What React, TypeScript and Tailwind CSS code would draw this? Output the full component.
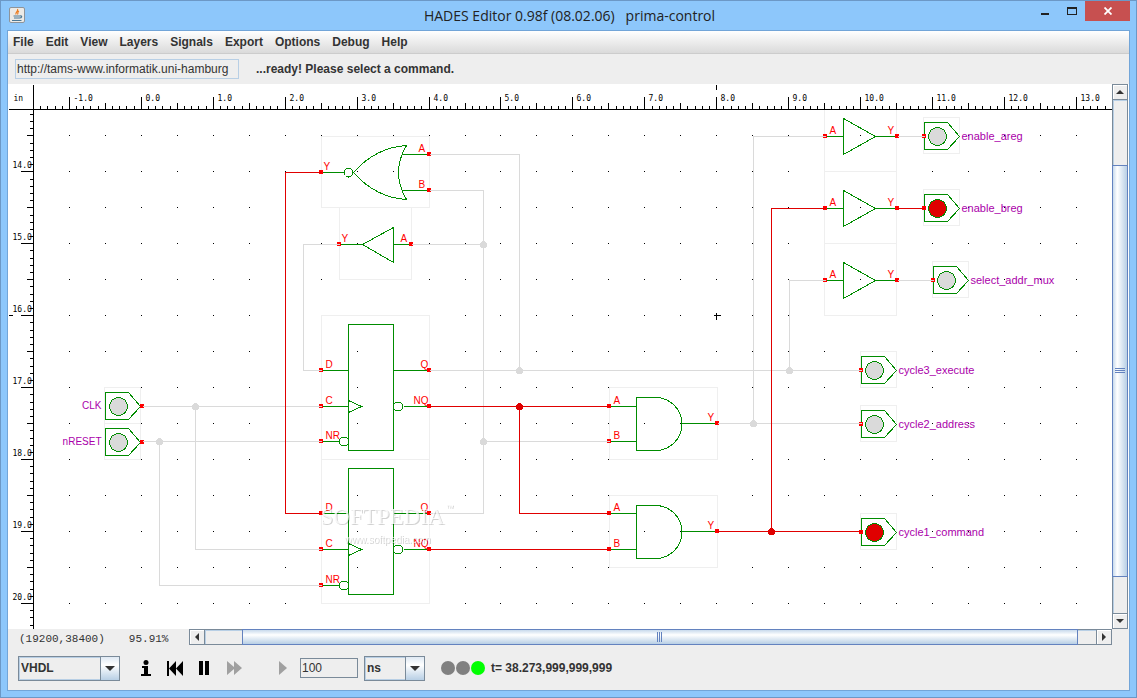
import { useState } from 'react';

const MENUS = ['File', 'Edit', 'View', 'Layers', 'Signals', 'Export', 'Options', 'Debug', 'Help'];

const GREEN = '#008c00';
const RED = '#e00000';
const GRAY = '#dadada';

// One inch on the sheet is a little less than 72 pixels at this zoom
const INCH = 71.93;
const rulerX = (inch: number) => Math.floor(69.4 + INCH * inch);
const rulerY = (inch: number) => Math.floor(135.9 + INCH * (inch - 13.5));

const range = (from: number, to: number) => Array.from({ length: to - from + 1 }, (_, i) => from + i);

const X_TICKS = range(-4, 144);
const Y_TICKS = range(132, 204);

const GRAY_WIRES = [
  'M142 406H321M195 406V549H321',
  'M142 441H321M159 441V585H321',
  'M429 154H519V370',
  'M429 190H483V513H429M483 441H609',
  'M411 244H483',
  'M339 244H303V370H321',
  'M429 370H861M789 370V280H825',
  'M717 423H861M753 423V136H825',
  'M897 136H924M897 280H933',
];

const RED_WIRES = [
  'M321 172H285V513H321',
  'M429 406H609M519 406V513H609',
  'M429 549H609',
  'M717 531H861M771 531V208H825',
  'M897 208H924',
];

const GRAY_JOINTS = [[195, 406], [159, 441], [483, 244], [519, 370], [483, 441], [789, 370], [753, 423]];
const RED_JOINTS = [[519, 406], [771, 531]];

const OUTPUTS = [
  { name: 'enable_areg', x: 924, y: 136, on: false },
  { name: 'enable_breg', x: 924, y: 208, on: true },
  { name: 'select_addr_mux', x: 933, y: 280, on: false },
  { name: 'cycle3_execute', x: 861, y: 370, on: false },
  { name: 'cycle2_address', x: 861, y: 424, on: false },
  { name: 'cycle1_command', x: 861, y: 532, on: true },
];

const INPUTS = [
  { name: 'CLK', y: 406 },
  { name: 'nRESET', y: 442 },
];

function Bounds({ x, y, w, h }: { x: number; y: number; w: number; h: number }) {
  return <rect x={x} y={y} width={w} height={h} fill="none" stroke="#efefef" />;
}

function Pin({ x, y, label, lx }: { x: number; y: number; label?: string; lx?: number }) {
  return (
    <>
      <rect x={x - 2.5} y={y - 2.5} width={4} height={4} fill="#ff0000" />
      {label && (
        <text x={lx} y={y - 3} fontSize={10} fill="#ff0000">
          {label}
        </text>
      )}
    </>
  );
}

function NorGate() {
  return (
    <g>
      <Bounds x={321} y={136} w={108} h={71} />
      <g fill="none" stroke={GREEN}>
        <path d="M321 172H344M402 154H429M402 190H429" />
        <circle cx={348} cy={172} r={4.5} />
        <path d="M353 172Q375 147 406 145Q390 172 406 199Q375 197 353 172Z" />
      </g>
      <Pin x={321} y={172} label="Y" lx={323} />
      <Pin x={429} y={154} label="A" lx={418} />
      <Pin x={429} y={190} label="B" lx={418} />
    </g>
  );
}

function BackBuffer() {
  return (
    <g>
      <Bounds x={339} y={207} w={72} h={72} />
      <path d="M339 244H362M393 244H411M362 244L393 227V262Z" fill="none" stroke={GREEN} />
      <Pin x={339} y={244} label="Y" lx={341} />
      <Pin x={411} y={244} label="A" lx={400} />
    </g>
  );
}

function Buffer({ y }: { y: number }) {
  return (
    <g>
      <Bounds x={824} y={y - 37} w={72} h={72} />
      <path d={`M825 ${y}H843M875 ${y}H897M843 ${y - 18}L875 ${y}L843 ${y + 18}Z`} fill="none" stroke={GREEN} />
      <Pin x={825} y={y} label="A" lx={829} />
      <Pin x={897} y={y} label="Y" lx={887} />
    </g>
  );
}

function FlipFlop({ top, d, c, r }: { top: number; d: number; c: number; r: number }) {
  return (
    <g>
      <Bounds x={321} y={top} w={108} h={144} />
      <g fill="none" stroke={GREEN}>
        <rect x={348} y={top + 9} width={45} height={126} />
        <path d={`M321 ${d}H348M321 ${c}H348M321 ${r}H339M393 ${d}H429M403 ${c}H429`} />
        <path d={`M348 ${c - 6}L361 ${c}L348 ${c + 6}`} />
        <circle cx={343.5} cy={r} r={4.5} />
        <circle cx={397.5} cy={c} r={4.5} />
      </g>
      <Pin x={321} y={d} label="D" lx={325} />
      <Pin x={321} y={c} label="C" lx={325} />
      <Pin x={321} y={r} label="NR" lx={325} />
      <Pin x={429} y={d} label="Q" lx={420} />
      <Pin x={429} y={c} label="NQ" lx={413} />
    </g>
  );
}

function AndGate({ top, a, b, y }: { top: number; a: number; b: number; y: number }) {
  return (
    <g>
      <Bounds x={609} y={top} w={108} h={72} />
      <path
        d={`M609 ${a}H636M609 ${b}H636M681 ${y}H717M655 ${y - 26}H636V${y + 27}H655A26.5 26.5 0 0 0 655 ${y - 26}`}
        fill="none"
        stroke={GREEN}
      />
      <Pin x={609} y={a} label="A" lx={613} />
      <Pin x={609} y={b} label="B" lx={613} />
      <Pin x={717} y={y} label="Y" lx={707} />
    </g>
  );
}

function Port({ x, y, on = false }: { x: number; y: number; on?: boolean }) {
  return (
    <>
      <Bounds x={x - 1} y={y - 19} w={36} h={36} />
      <path d={`M${x} ${y - 14}H${x + 23}L${x + 35} ${y}L${x + 23} ${y + 13}H${x}Z`} fill="none" stroke={GREEN} />
      <circle cx={x + 13} cy={y} r={9} fill={on ? RED : GRAY} stroke={GREEN} />
    </>
  );
}

function Rulers() {
  return (
    <g stroke="#000">
      <rect x={-1} y={-1} width="100%" height={26} fill="#fff" stroke="none" />
      <path d="M0 25H4000M25 0V4000" />
      <path d="M708 0V5M0 231H4" />
      <g transform="translate(-8 -84)">
        {X_TICKS.map((t) => (
          <path key={t} d={`M${rulerX(t / 10)} 109V${t % 10 === 0 ? 96 : t % 5 === 0 ? 102 : 105}`} />
        ))}
        {Y_TICKS.map((t) => (
          <path key={t} d={`M33 ${rulerY(t / 10)}H${t % 10 === 0 ? 20 : t % 5 === 0 ? 26 : 29}`} />
        ))}
      </g>
      <g transform="translate(-8 -84)" stroke="none" fill="#000" className="font-['DejaVu_Sans_Mono',monospace] text-[8px]">
        <text x={13} y={100}>in</text>
        {range(0, 14).map((i) => (
          <text key={i} x={rulerX(i) + 4} y={100}>{(i - 1).toFixed(1)}</text>
        ))}
        {range(14, 20).map((i) => (
          <text key={i} x={12} y={rulerY(i) - 4}>{i.toFixed(1)}</text>
        ))}
      </g>
    </g>
  );
}

function Schematic() {
  return (
    <svg
      role="img"
      aria-label="Schematic of prima-control"
      className="block min-w-0 flex-1 bg-white font-['Liberation_Sans',sans-serif]"
      shapeRendering="crispEdges"
    >
      {/* shift by half a pixel so that integer coordinates hit pixel centres */}
      <g transform="translate(-7.5 -83.5)">
        {range(0, 28).map((c) =>
          range(0, 13).map((r) => (
            <rect key={`${c}-${r}`} x={rulerX(c / 2) - 0.5} y={rulerY(13.5 + r / 2) - 0.5} width={1} height={1} />
          ))
        )}
        <NorGate />
        <BackBuffer />
        <FlipFlop top={315} d={370} c={406} r={441} />
        <FlipFlop top={459} d={513} c={549} r={585} />
        <AndGate top={387} a={406} b={441} y={423} />
        <AndGate top={495} a={513} b={549} y={531} />
        <Buffer y={136} />
        <Buffer y={208} />
        <Buffer y={280} />

        {OUTPUTS.map((o) => (
          <g key={o.name}>
            <Port x={o.x} y={o.y} on={o.on} />
            <Pin x={o.x} y={o.y} />
            <text x={o.x + 37} y={o.y + 3} fontSize={11} fill="#aa00aa">{o.name}</text>
          </g>
        ))}
        {INPUTS.map((p) => (
          <g key={p.name}>
            <Port x={105} y={p.y} />
            <Pin x={142} y={p.y} />
            <text x={101} y={p.y + 2} fontSize={10} fill="#aa00aa" textAnchor="end">{p.name}</text>
          </g>
        ))}

        <path d={GRAY_WIRES.join('')} fill="none" stroke={GRAY} />
        <path d={RED_WIRES.join('')} fill="none" stroke={RED} />
        {GRAY_JOINTS.map(([x, y]) => (
          <circle key={`${x}-${y}`} cx={x} cy={y} r={3.5} fill={GRAY} />
        ))}
        {RED_JOINTS.map(([x, y]) => (
          <circle key={`${x}-${y}`} cx={x} cy={y} r={3.5} fill={RED} />
        ))}

        <path d="M713 315H720M716 312V319" stroke="#000" />

        <g fill="#fff" fillOpacity={0.8} className="drop-shadow-[1px_1px_0_rgba(0,0,0,0.22)]">
          <text x={320} y={523} fontSize={23} className="font-['Liberation_Serif',serif]">SOFTPEDIA</text>
          <text x={445} y={509} fontSize={8}>™</text>
          <text x={344} y={542} fontSize={10}>www.softpedia.com</text>
        </g>
      </g>
      <g transform="translate(0.5 0.5)">
        <Rulers />
      </g>
    </svg>
  );
}

function Arrow({ dir }: { dir: 'up' | 'down' | 'left' | 'right' }) {
  const shapes = {
    up: 'M0 6L4 2L8 6Z',
    down: 'M0 2L4 6L8 2Z',
    left: 'M6 0L2 4L6 8Z',
    right: 'M2 0L6 4L2 8Z',
  };
  return (
    <svg viewBox="0 0 8 8" className="size-2" aria-hidden="true">
      <path d={shapes[dir]} fill="#333" />
    </svg>
  );
}

function ScrollButton({ dir }: { dir: 'up' | 'down' | 'left' | 'right' }) {
  return (
    <button
      aria-label={`Scroll ${dir}`}
      className="flex size-4 shrink-0 items-center justify-center border border-[#7a8a99] bg-[#eee] shadow-[inset_1px_1px_0_#fff]"
    >
      <Arrow dir={dir} />
    </button>
  );
}

function VerticalScroll() {
  return (
    <div className="flex w-[17px] shrink-0 flex-col border-r border-white bg-[#eee]">
      <ScrollButton dir="up" />
      <div className="flex flex-1 flex-col border-x border-[#7a8a99] shadow-[inset_1px_1px_0_#b8cfe5]">
        <div className="flex-[65]" />
        <div className="-mx-px flex flex-[411] flex-col items-center justify-center gap-px border border-[#6382bf] bg-linear-to-r from-[#c8daec] via-white via-30% to-[#b8cfe5]">
          {range(0, 2).map((i) => (
            <div key={i} className="h-px w-2.5 bg-[#6382bf]" />
          ))}
        </div>
        <div className="flex-[36]" />
      </div>
      <ScrollButton dir="down" />
    </div>
  );
}

function HorizontalScroll() {
  return (
    <div className="flex h-4 flex-1">
      <ScrollButton dir="left" />
      <div className="flex flex-1 border-y border-[#7a8a99] shadow-[inset_1px_1px_0_#b8cfe5]">
        <div className="flex-[37]" />
        <div className="-my-px flex flex-[836] items-center justify-center gap-px border border-[#6382bf] bg-linear-to-b from-[#c8daec] via-white via-35% to-[#b8cfe5]">
          {range(0, 2).map((i) => (
            <div key={i} className="h-2.5 w-px bg-[#6382bf]" />
          ))}
        </div>
        <div className="flex-[18]" />
      </div>
      <ScrollButton dir="right" />
    </div>
  );
}

function Combo({ label, options }: { label: string; options: string[] }) {
  return (
    <div className="relative flex h-[25px] border border-[#7a8a99] bg-[#eee]">
      <select
        aria-label={label}
        className="w-full appearance-none border border-[#b8cfe5] bg-transparent pl-px font-bold text-[#333] outline-none"
      >
        {options.map((o) => (
          <option key={o}>{o}</option>
        ))}
      </select>
      <div className="pointer-events-none absolute inset-y-0 right-0 flex w-[19px] items-center justify-center border-l border-[#7a8a99] bg-linear-to-b from-[#dfe9f3] via-white via-35% to-[#b8cfe5]">
        <svg viewBox="0 0 10 5" className="h-[5px] w-2.5" aria-hidden="true">
          <path d="M0 0H10L5 5Z" fill="#333" />
        </svg>
      </div>
    </div>
  );
}

function JavaIcon() {
  return (
    <svg viewBox="0 0 16 16" className="size-4" aria-hidden="true">
      <rect x="0.5" y="0.5" width="15" height="15" rx="1.5" fill="#eceae6" stroke="#8d949b" />
      <path d="M8.5 2C10 4 6 5 7 7.5M10 4C8 5 9.5 6 8.5 7.5" fill="none" stroke="#ec7a1c" strokeWidth="1.2" />
      <path d="M4.5 9H11M5 11H10.5M3 13.5H12.5M11 9C13.5 8.5 13 11 10.5 11" fill="none" stroke="#4a7896" strokeWidth="1.2" />
    </svg>
  );
}

function TitleBar() {
  return (
    <header className="flex h-[29px] shrink-0 items-start">
      <div className="flex flex-1 pt-[6px] pl-[2px]">
        <JavaIcon />
      </div>
      <h1 className="pt-1 font-['Open_Sans',sans-serif] text-[14px] leading-[22px] whitespace-pre text-[#222]">
        {'HADES Editor 0.98f (08.02.06)   prima-control'}
      </h1>
      <div className="flex flex-1 justify-end">
        <button aria-label="Minimize" className="flex h-5 w-[26px] items-center justify-center pt-[6px]">
          <span className="h-[2px] w-2 bg-[#222]" />
        </button>
        <button aria-label="Maximize" className="flex h-5 w-[27px] items-center justify-center">
          <span className="h-2 w-2.5 border border-t-2 border-[#222]" />
        </button>
        <button aria-label="Close" className="flex h-5 w-[45px] items-center justify-center bg-[#c75050]">
          <svg viewBox="0 0 8 8" className="size-2" aria-hidden="true">
            <path d="M0.5 0.5L7.5 7.5M7.5 0.5L0.5 7.5" stroke="#fff" strokeWidth="1.8" />
          </svg>
        </button>
      </div>
    </header>
  );
}

function Toolbar() {
  const [step, setStep] = useState('100');

  return (
    <div className="flex h-[43px] shrink-0 items-center pb-px pl-[10px]">
      <div className="w-[102px]">
        <Combo label="Simulation model" options={['VHDL']} />
      </div>
      <div className="ml-5 flex items-center gap-[15px]">
        <button aria-label="Info">
          <svg viewBox="0 0 12 16" className="h-4 w-3" aria-hidden="true">
            <circle cx="6" cy="2.5" r="2.5" />
            <path d="M2 6H8V14H11V16H1V14H4V8H2Z" />
          </svg>
        </button>
        <button aria-label="Rewind">
          <svg viewBox="0 0 17 15" className="h-[15px] w-[17px]" aria-hidden="true">
            <path d="M0 0H2V15H0ZM9 0V15L2 7.5ZM16 0V15L9 7.5Z" />
          </svg>
        </button>
        <button aria-label="Pause">
          <svg viewBox="0 0 10 14" className="h-3.5 w-2.5" aria-hidden="true">
            <path d="M0 0H4V14H0ZM6 0H10V14H6Z" />
          </svg>
        </button>
        <button aria-label="Fast forward" className="ml-[3px]">
          <svg viewBox="0 0 15 14" className="h-3.5 w-[15px]" aria-hidden="true">
            <path d="M0 0L7 6V0L15 7L7 14V8L0 14Z" fill="#a0a0a0" />
          </svg>
        </button>
        <button aria-label="Single step" className="ml-[22px]">
          <svg viewBox="0 0 8 14" className="h-3.5 w-2" aria-hidden="true">
            <path d="M0 0L8 7L0 14Z" fill="#a0a0a0" />
          </svg>
        </button>
      </div>
      <input
        aria-label="Step time"
        value={step}
        onChange={(e) => setStep(e.target.value)}
        className="ml-[13px] h-5 w-[58px] border border-[#7a8a99] bg-[#eee] px-px text-[#333] outline-none"
      />
      <div className="ml-[6px] w-[61px]">
        <Combo label="Time unit" options={['ns', 'us', 'ms', 's']} />
      </div>
      <div className="ml-4 flex items-center gap-px">
        <span className="size-3.5 rounded-full bg-[#808080]" />
        <span className="size-3.5 rounded-full bg-[#808080]" />
        <span className="size-3.5 rounded-full bg-[#00ff00]" />
      </div>
      <output className="ml-[6px] font-bold">t= 38.273,999,999,999</output>
    </div>
  );
}

export default function App() {
  const [url, setUrl] = useState('http://tams-www.informatik.uni-hamburg');

  return (
    <div className="flex h-screen flex-col border border-[#6c98c6] bg-[#8dc7fb] px-[6px] pb-[6px] font-['Liberation_Sans',sans-serif] text-[12px] leading-4 text-[#333]">
      <TitleBar />
      <main className="flex min-h-0 flex-1 flex-col border border-[#72a5d8] bg-[#eee]">
        <nav className="flex h-[23px] shrink-0 items-center gap-3 border-b border-[#ccc] bg-linear-to-b from-white to-[#dadada] pl-[5px] font-bold">
          {MENUS.map((m) => (
            <button key={m}>{m}</button>
          ))}
        </nav>
        <div className="flex h-[30px] shrink-0 items-center gap-[17px] pl-[7px]">
          <input
            aria-label="Design URL"
            value={url}
            onChange={(e) => setUrl(e.target.value)}
            className="h-5 w-[224px] border border-[#b8cfe5] px-px outline-none"
          />
          <p className="font-bold">...ready! Please select a command.</p>
        </div>
        <div className="flex min-h-0 flex-1">
          <Schematic />
          <VerticalScroll />
        </div>
        <div className="flex h-[18px] shrink-0 items-start pr-[17px]">
          <div className="flex w-[181px] gap-6 pt-[2px] pl-[11px] font-['Liberation_Mono',monospace] text-[11px]">
            <span>(19200,38400)</span>
            <span>95.91%</span>
          </div>
          <HorizontalScroll />
        </div>
        <Toolbar />
      </main>
    </div>
  );
}
